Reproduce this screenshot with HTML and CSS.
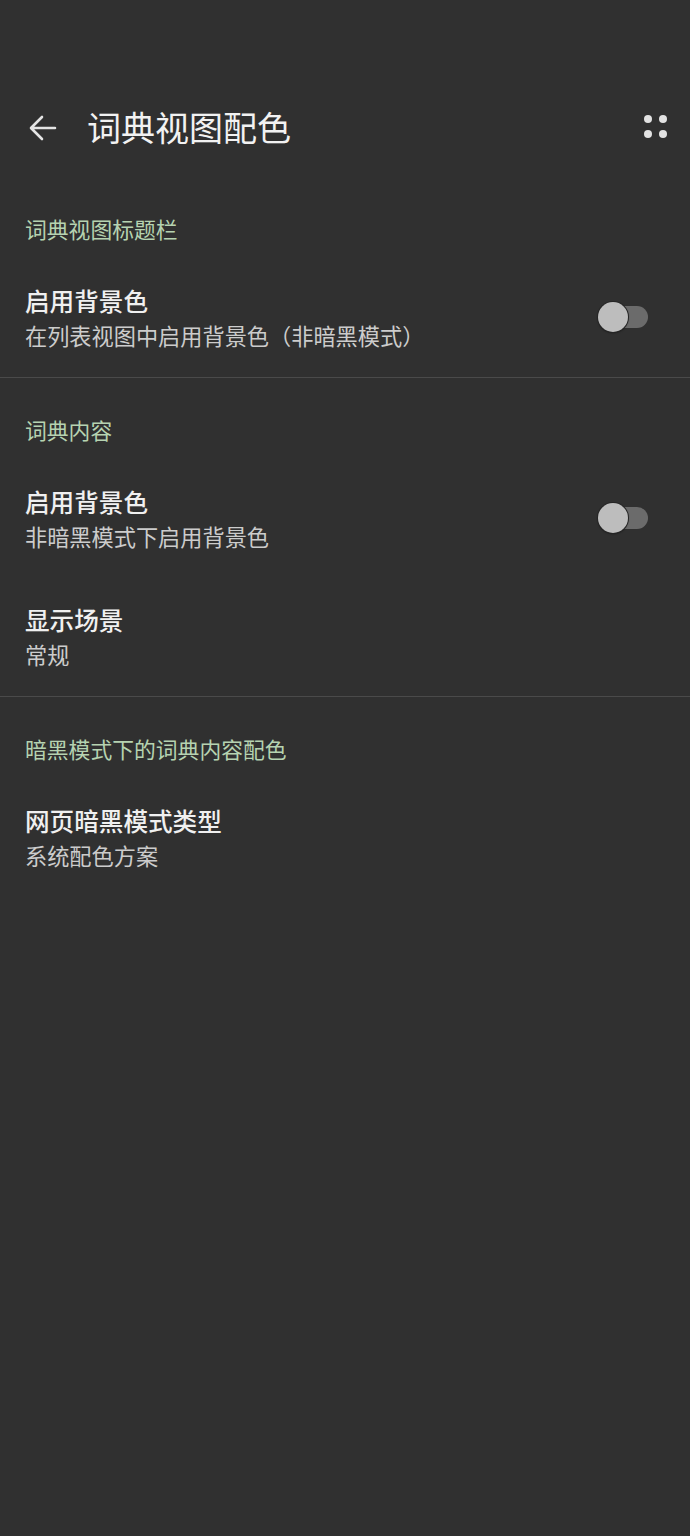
FILE: index.html
```html
<!DOCTYPE html>
<html lang="zh-CN">
<head>
<meta charset="utf-8">
<title>词典视图配色</title>
<link rel="stylesheet" href="styles.css">
</head>
<body>
<div class="screen">
  <header class="appbar">
    <div class="back">
      <svg width="28" height="26" viewBox="0 0 28 26"><path d="M26 13H3M13 2L2 13l11 11" fill="none" stroke="#e4e4e4" stroke-width="2.6" stroke-linecap="round" stroke-linejoin="round"/></svg>
    </div>
    <h1 class="title">词典视图配色</h1>
    <div class="menu">
      <svg width="24" height="24" viewBox="0 0 24 24"><circle cx="4" cy="4" r="4" fill="#e2e2e2"/><circle cx="19" cy="4" r="4" fill="#e2e2e2"/><circle cx="4" cy="19" r="4" fill="#e2e2e2"/><circle cx="19" cy="19" r="4" fill="#e2e2e2"/></svg>
    </div>
  </header>

  <section class="group first">
    <div class="group-title">词典视图标题栏</div>
    <div class="item">
      <div class="texts">
        <div class="item-title">启用背景色</div>
        <div class="item-sub">在列表视图中启用背景色（非暗黑模式）</div>
      </div>
      <div class="switch"><span class="track"></span><span class="thumb"></span></div>
    </div>
  </section>

  <section class="group">
    <div class="group-title">词典内容</div>
    <div class="item">
      <div class="texts">
        <div class="item-title">启用背景色</div>
        <div class="item-sub">非暗黑模式下启用背景色</div>
      </div>
      <div class="switch"><span class="track"></span><span class="thumb"></span></div>
    </div>
    <div class="item">
      <div class="texts">
        <div class="item-title">显示场景</div>
        <div class="item-sub">常规</div>
      </div>
    </div>
  </section>

  <section class="group last">
    <div class="group-title">暗黑模式下的词典内容配色</div>
    <div class="item">
      <div class="texts">
        <div class="item-title">网页暗黑模式类型</div>
        <div class="item-sub">系统配色方案</div>
      </div>
    </div>
  </section>
</div>
</body>
</html>
```

FILE: styles.css
```css
html, body {
  margin: 0;
  padding: 0;
  background: #303030;
}
body {
  font-family: "Noto Sans CJK SC", "Noto Sans", sans-serif;
  color: #eeeeee;
  width: 690px;
  height: 1536px;
  overflow: hidden;
}
.screen {
  display: flex;
  flex-direction: column;
}
.appbar {
  display: flex;
  align-items: center;
  height: 76px;
  margin-top: 89px;
  padding: 0 22px 0 29px;
}
.back {
  display: flex;
  width: 28px;
  height: 26px;
  margin-top: 2px;
}
.title {
  flex: 1;
  margin: 0 0 0 30px;
  font-size: 34px;
  font-weight: 400;
  line-height: 44px;
  color: #f2f2f2;
  letter-spacing: 0;
}
.menu {
  display: flex;
  width: 24px;
  height: 24px;
}
.group {
  border-bottom: 1px solid #4a4a4a;
}
.group.last {
  border-bottom: none;
}
.group-title {
  padding: 37px 25px 15px;
  font-size: 21.8px;
  line-height: 30px;
  color: #b6d3b1;
}
.group.first .group-title {
  padding-top: 49px;
}
.item {
  display: flex;
  align-items: center;
  padding: 24px 42px 27px 25px;
}
.texts {
  flex: 1;
}
.item-title {
  font-size: 24.6px;
  font-weight: 500;
  line-height: 34px;
  color: #f0f0f0;
}
.item-sub {
  margin-top: 3px;
  font-size: 22.2px;
  line-height: 30px;
  color: #cccccc;
}
.switch {
  position: relative;
  width: 50px;
  height: 31px;
  margin-top: 1px;
}
.track {
  position: absolute;
  left: 6px;
  right: 0;
  top: 4px;
  height: 22px;
  border-radius: 11px;
  background: #6b6b6b;
}
.thumb {
  position: absolute;
  left: 0;
  top: 0;
  width: 30px;
  height: 30px;
  border-radius: 50%;
  background: #bdbdbd;
  box-shadow: 0 0 0 1px #262626, 0 1px 2px rgba(0,0,0,0.5);
}
```
